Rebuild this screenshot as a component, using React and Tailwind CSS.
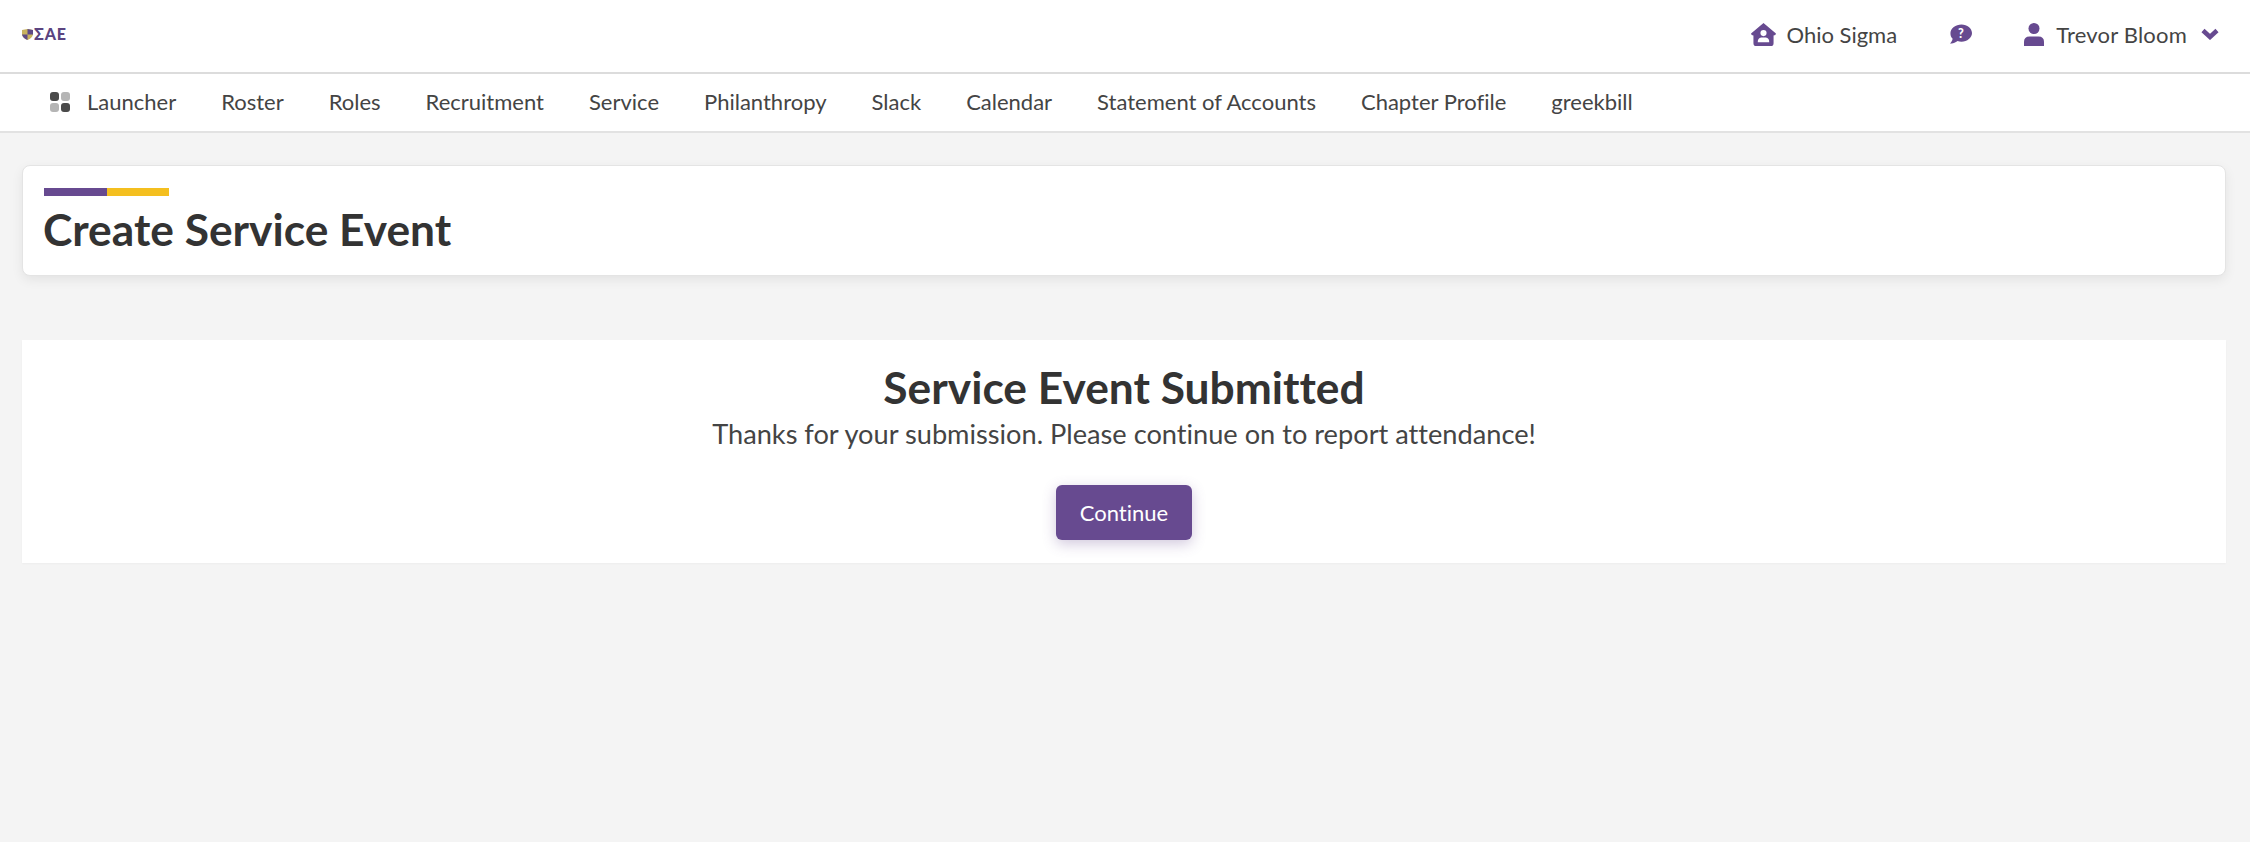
const navLinks = [
  "Roster",
  "Roles",
  "Recruitment",
  "Service",
  "Philanthropy",
  "Slack",
  "Calendar",
  "Statement of Accounts",
  "Chapter Profile",
  "greekbill",
];

function Logo() {
  return (
    <div className="flex items-center gap-px">
      <svg viewBox="0 0 12 12" className="w-[11px] h-[11px]">
        <path d="M0 1 L6 0 L12 1 L12 6 Q11 10 6 12 Q1 10 0 6 Z" fill="#c9b25e" />
        <path d="M6 0 L12 1 L12 6 L6 6 Z" fill="#5f4a86" />
        <path d="M6 6 L6 12 Q1 10 0 6 Z" fill="#5f4a86" />
      </svg>
      <span className="text-[16px] leading-none font-black tracking-[0.8px] text-[#5b4480]">ΣΑΕ</span>
    </div>
  );
}

function LauncherIcon() {
  return (
    <div className="grid grid-cols-2 gap-[2px] w-[20px] h-[20px]">
      <span className="rounded-[3px] bg-[#4a4a4a]" />
      <span className="rounded-[3px] bg-[#b5b5b5]" />
      <span className="rounded-[3px] bg-[#b5b5b5]" />
      <span className="rounded-[3px] bg-[#4a4a4a]" />
    </div>
  );
}

function HouseIcon() {
  return (
    <svg viewBox="0 0 26 24" className="w-[25px] h-[23px]" fill="#674a90">
      <path d="M13 0 L26 11 Q26 13 23.500 13 L23.500 21 Q23.500 24 20.500 24 L5.500 24 Q2.500 24 2.500 21 L2.500 13 Q0 13 0 11 Z" />
      <circle cx="13" cy="10.500" r="3.200" fill="#fff" />
      <path d="M7 20 Q7 15.500 10.500 15 L15.500 15 Q19 15.500 19 20 Z" fill="#fff" />
    </svg>
  );
}

function HelpIcon() {
  return (
    <svg viewBox="0 0 24 20" className="w-[23px] h-[20px]">
      <path
        d="M13 0 C19 0 24 4 24 9 C24 14 19 18 13 18 C11.500 18 10 17.700 9 17.300 C7 19 3.500 20 1 20 C2.500 18.500 3.500 17 3.800 15 C2 13.500 1.500 11.500 1.500 9 C1.500 4 7 0 13 0 Z"
        fill="#674a90"
      />
      <text x="12.500" y="14" textAnchor="middle" fontSize="13" fontWeight="900" fill="#fff" fontFamily="Lato, sans-serif">?</text>
    </svg>
  );
}

function UserIcon() {
  return (
    <svg viewBox="0 0 20 23" className="w-[20px] h-[23px]" fill="#674a90">
      <circle cx="10" cy="5.500" r="5.500" />
      <path d="M0 23 L0 19 Q0 13.500 5.500 13.500 L14.500 13.500 Q20 13.500 20 19 L20 23 Z" />
    </svg>
  );
}

function ChevronIcon() {
  return (
    <svg viewBox="0 0 18 12" className="w-[18px] h-[12px]" fill="none" stroke="#674a90" strokeWidth="4.500">
      <path d="M2 2.500 L9 9 L16 2.500" />
    </svg>
  );
}

export default function App() {
  return (
    <div className="min-h-[842px] bg-[#f4f4f4] font-['Lato',sans-serif] text-[#444] [font-variant-ligatures:none]">
      <header className="h-[74px] flex items-center justify-between bg-white border-b-2 border-[#dcdcdc] pl-[22px] pr-[31px] pb-[4px]">
        <Logo />
        <div className="flex items-center text-[22px]">
          <HouseIcon />
          <span className="ml-[11px]">Ohio Sigma</span>
          <span className="ml-[52px]"><HelpIcon /></span>
          <span className="ml-[52px]"><UserIcon /></span>
          <span className="ml-[12px] tracking-[0.2px]">Trevor Bloom</span>
          <span className="ml-[14px]"><ChevronIcon /></span>
        </div>
      </header>

      <nav className="h-[59px] flex items-center gap-[45px] bg-white border-b-2 border-[#e2e2e2] pl-[50px] pb-[2px] text-[22px]">
        <div className="flex items-center gap-[17px]">
          <LauncherIcon />
          <span>Launcher</span>
        </div>
        {navLinks.map((link) => (
          <span key={link}>{link}</span>
        ))}
      </nav>

      <main className="pl-[22px] pr-[24px] pt-[32px]">
        <section className="h-[111px] rounded-[8px] bg-white border border-[#e4e4e4] px-[21px] pt-[22px] shadow-[0_4px_12px_rgba(0,0,0,0.07)]">
          <div className="flex h-[8px] w-[125px]">
            <span className="w-1/2 bg-[#674a90]" />
            <span className="w-1/2 bg-[#f4bf1f]" />
          </div>
          <h1 className="mt-[6px] -ml-px text-[44.3px] leading-[54px] font-bold text-[#333]">Create Service Event</h1>
        </section>

        <section className="mt-[64px] h-[223px] flex flex-col items-center bg-white pt-[20px] shadow-[0_1px_2px_rgba(0,0,0,0.03)]">
          <h2 className="text-[44.3px] leading-[54px] font-bold text-[#333]">Service Event Submitted</h2>
          <p className="mt-[2px] text-[27.2px] leading-[36px]">Thanks for your submission. Please continue on to report attendance!</p>
          <button className="mt-[33px] w-[136px] h-[55px] rounded-[6px] bg-[#674a90] text-[22px] text-white shadow-[0_4px_14px_rgba(103,74,144,0.3)]">
            Continue
          </button>
        </section>
      </main>
    </div>
  );
}
